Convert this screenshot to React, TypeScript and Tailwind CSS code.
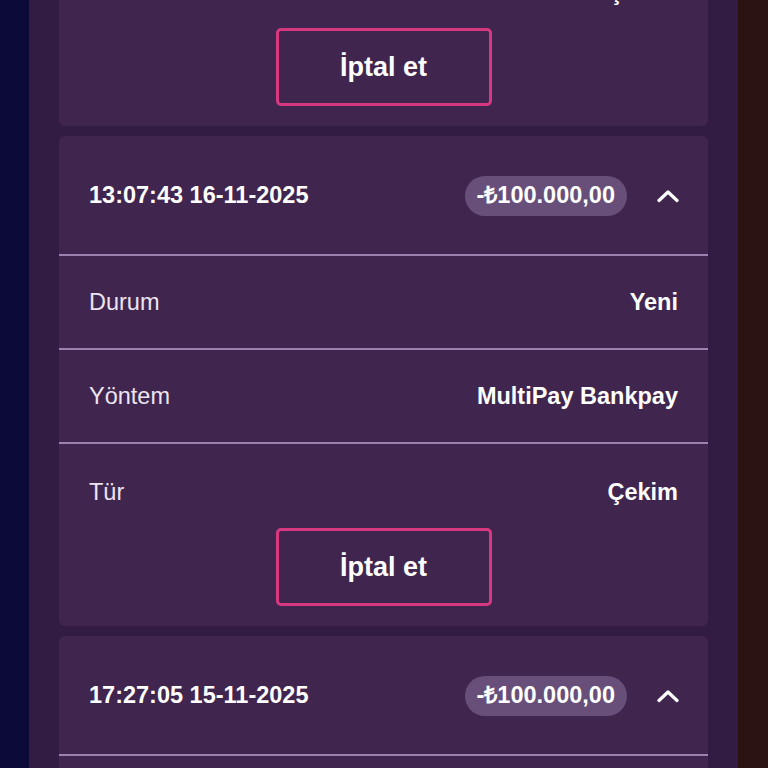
const font = { fontFamily: '"Liberation Sans", Arial, sans-serif' };

type Tx = { time: string; amount: string; status: string; method: string; kind: string };

const items: Tx[] = [
  { time: "09:12:18 17-11-2025", amount: "-₺100.000,00", status: "Yeni", method: "MultiPay Bankpay", kind: "Çekim" },
  { time: "13:07:43 16-11-2025", amount: "-₺100.000,00", status: "Yeni", method: "MultiPay Bankpay", kind: "Çekim" },
  { time: "17:27:05 15-11-2025", amount: "-₺100.000,00", status: "Yeni", method: "MultiPay Bankpay", kind: "Çekim" },
];

function ChevronUp() {
  return (
    <svg width="22" height="14" viewBox="0 0 22 14" fill="none" className="shrink-0">
      <path d="M2 11.5 L11 3 L20 11.5" stroke="white" strokeWidth="3.2" strokeLinecap="round" strokeLinejoin="round" />
    </svg>
  );
}

function Row({ label, value, last }: { label: string; value: string; last?: boolean }) {
  if (last) {
    return (
      <div className="flex justify-between px-[30px] pt-[35px] h-[84px] text-[23.5px] leading-[26px]">
        <span className="text-[#ece4f1]">{label}</span>
        <span className="font-bold text-white">{value}</span>
      </div>
    );
  }
  return (
    <div className="flex items-center justify-between px-[30px] h-[94px] border-b-2 border-[#9c82b2] text-[23.5px] leading-[26px]">
      <span className="text-[#ece4f1]">{label}</span>
      <span className="font-bold text-white">{value}</span>
    </div>
  );
}

function Card({ tx }: { tx: Tx }) {
  return (
    <div className="rounded-md bg-[#40264f] flex flex-col shrink-0">
      <div className="flex items-center justify-between h-[120px] pt-[2px] px-[30px] border-b-2 border-[#9c82b2]">
        <span className="text-[23.5px] font-bold text-white">{tx.time}</span>
        <div className="flex items-center">
          <span className="h-[40px] px-[12px] rounded-full bg-[#674f7a] flex items-center text-[23.5px] font-bold text-white">
            {tx.amount}
          </span>
          <span className="ml-[30px] mr-[-1px] flex items-center">
            <ChevronUp />
          </span>
        </div>
      </div>
      <Row label="Durum" value={tx.status} />
      <Row label="Yöntem" value={tx.method} />
      <Row label="Tür" value={tx.kind} last />
      <div className="flex justify-center pb-[20px]">
        <button className="w-[216px] h-[78px] rounded-[5px] border-[3px] border-[#d8387f] text-white text-[27px] font-bold">
          İptal et
        </button>
      </div>
    </div>
  );
}

export default function App() {
  return (
    <div className="w-[768px] h-[768px] overflow-hidden flex" style={font}>
      <div className="w-[29px] bg-[#0b0a38]" />
      <div className="flex-1 bg-[#331c44] px-[30px] overflow-hidden">
        <div className="flex flex-col gap-[10px] mt-[-364px]">
          {items.map((tx, i) => (
            <Card key={i} tx={tx} />
          ))}
        </div>
      </div>
      <div className="w-[30px] bg-[#2a1311]" />
    </div>
  );
}
